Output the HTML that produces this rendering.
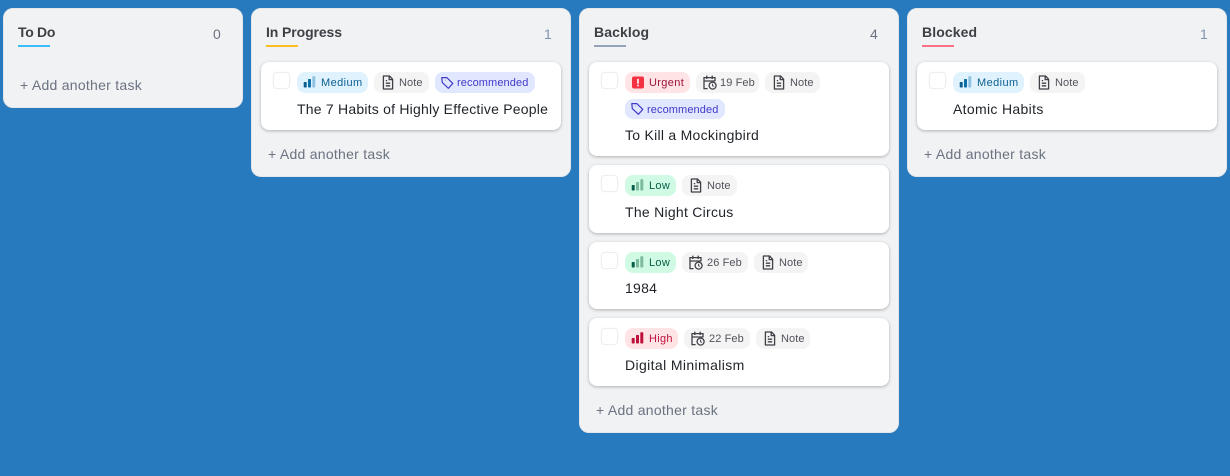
<!DOCTYPE html>
<html lang="en"><head><meta charset="utf-8"><title>Board</title>
<style>
*{box-sizing:border-box}
html,body{margin:0;padding:0;width:1230px;height:476px;overflow:hidden;background:#267abd;font-family:"Liberation Sans",sans-serif}
.col{position:absolute;top:8px;background:#f1f2f4;border-radius:10px;border:1px solid #e4e6ea}
.h{position:absolute;top:15px;left:14px;font-size:14px;line-height:17px;font-weight:700;color:#3f3f46;white-space:nowrap}
.u{position:absolute;top:36px;left:14px;width:32px;height:2px}
.n{position:absolute;top:17px;font-size:14px;line-height:16px;color:#6b7280}
.add{position:absolute;font-size:14px;line-height:18px;color:#6b7280;white-space:nowrap;letter-spacing:.27px}
.card{position:absolute;left:9px;width:300px;background:#fff;border-radius:8px;box-shadow:0 1px 3px rgba(0,0,0,.28)}
.cb{position:absolute;left:12px;top:10px;width:17px;height:17px;border:1px solid #eceef1;border-radius:4px;background:#fff;box-shadow:0 0 2px rgba(0,0,0,.04)}
.t{position:absolute;left:36px;font-size:14px;line-height:18px;color:#1f2328;white-space:nowrap;letter-spacing:.27px}
.c{position:absolute;height:21px;border-radius:8px;font-size:11px;line-height:21px;white-space:nowrap}
.c svg{position:absolute;top:3px;left:6px;width:14px;height:15px}
.c span{position:absolute;top:1px;letter-spacing:.1px}
.m{background:#e0f2fe;color:#0b5f8f}.g{background:#f4f4f5;color:#52525b}.r{background:#e0e7ff;color:#4338ca}
.ur{background:#ffe4e6;color:#9f1239}.lo{background:#d1fae5;color:#065f46}.hi{background:#ffe4e6;color:#be123c}
.m span{letter-spacing:.4px}.ur span{letter-spacing:.35px}.lo span,.hi span{letter-spacing:.3px}
.cal{left:7px!important}
</style></head><body>
<svg width="0" height="0" style="position:absolute">
<symbol id="note" viewBox="0 0 14 15"><path d="M2.6 1h5.9L11.6 4.2V14H2.4V1zM8.2 1.2v3.4h3.2M4.8 8.2h4.4M4.8 10.8h4.4M4.8 5.6h1.4" fill="none" stroke="#3f3f46" stroke-width="1.3" stroke-linejoin="round"/></symbol>
<symbol id="tag" viewBox="0 0 14 15"><path d="M.8 2.6h5l6 5.8-4.4 4.9L1.3 7.6zM4 5.2h.4" fill="none" stroke="#4338ca" stroke-width="1.2" stroke-linejoin="round"/></symbol>
<symbol id="cal" viewBox="0 0 14 15"><path d="M4.6 13.6H1V2.6h11v3.6M1 6h11M3.8 .6v3.4M9.2 .6v3.4" fill="none" stroke="#3f3f46" stroke-width="1.3"/><circle cx="9.6" cy="10.6" r="3.5" fill="#f4f4f5" stroke="#3f3f46" stroke-width="1.3"/><path d="M9.6 8.8v1.9l1.1.7" fill="none" stroke="#3f3f46" stroke-width="1"/></symbol>
<symbol id="bm" viewBox="0 0 14 15"><rect x=".7" y="7" width="3" height="5.5" rx=".7" fill="#0b5f8f"/><rect x="5" y="4" width="3" height="8.5" rx=".7" fill="#0b6fa8"/><rect x="9.3" y="1.3" width="3" height="11.2" rx=".7" fill="#8fc1e0"/></symbol>
<symbol id="bl" viewBox="0 0 14 15"><rect x=".7" y="7" width="3" height="5.5" rx=".7" fill="#065f46"/><rect x="5" y="4" width="3" height="8.5" rx=".7" fill="#7dbb9f"/><rect x="9.3" y="1.3" width="3" height="11.2" rx=".7" fill="#7dbb9f"/></symbol>
<symbol id="bh" viewBox="0 0 14 15"><rect x=".7" y="7" width="3" height="5.5" rx=".7" fill="#be123c"/><rect x="5" y="4" width="3" height="8.5" rx=".7" fill="#be123c"/><rect x="9.3" y="1.3" width="3" height="11.2" rx=".7" fill="#be123c"/></symbol>
<symbol id="ex" viewBox="0 0 14 15"><rect x="1" y="1.5" width="12" height="12" rx="2" fill="#f43241"/><rect x="6.2" y="3.9" width="1.6" height="4.8" fill="#fff"/><rect x="6.2" y="9.7" width="1.6" height="1.6" fill="#fff"/></symbol>
</svg>

<div class="col" style="left:3px;width:240px;height:100px">
<div class="h" style="letter-spacing:-.3px">To Do</div><div class="u" style="background:#38bdf8"></div><div class="n" style="left:209px">0</div>
<div class="add" style="left:16px;top:67px">+ Add another task</div>
</div>

<div class="col" style="left:251px;width:320px;height:169px">
<div class="h" style="letter-spacing:-.1px">In Progress</div><div class="u" style="background:#fbbf24"></div><div class="n" style="left:292px;color:#7e93ad">1</div>
<div class="card" style="top:53px;height:68px"><div class="cb"></div>
<div class="c m" style="left:36px;top:10px;width:71px"><svg><use href="#bm"/></svg><span style="left:24px">Medium</span></div>
<div class="c g" style="left:113px;top:10px;width:55px"><svg style="left:7px"><use href="#note"/></svg><span style="left:25px">Note</span></div>
<div class="c r" style="left:174px;top:10px;width:100px"><svg><use href="#tag"/></svg><span style="left:22px">recommended</span></div>
<div class="t" style="top:38px;letter-spacing:.22px">The 7 Habits of Highly Effective People</div>
</div>
<div class="add" style="left:16px;top:136px">+ Add another task</div>
</div>

<div class="col" style="left:579px;width:320px;height:425px">
<div class="h" style="letter-spacing:.1px">Backlog</div><div class="u" style="background:#94a3b8"></div><div class="n" style="left:290px">4</div>

<div class="card" style="top:53px;height:94px"><div class="cb"></div>
<div class="c ur" style="left:36px;top:10px;width:65px"><svg><use href="#ex"/></svg><span style="left:24px">Urgent</span></div>
<div class="c g" style="left:107px;top:10px;width:63px"><svg class="cal"><use href="#cal"/></svg><span style="left:24px">19 Feb</span></div>
<div class="c g" style="left:176px;top:10px;width:55px"><svg style="left:7px"><use href="#note"/></svg><span style="left:25px">Note</span></div>
<div class="c r" style="left:36px;top:37px;width:100px;height:20px;line-height:20px"><svg style="top:2px"><use href="#tag"/></svg><span style="left:22px">recommended</span></div>
<div class="t" style="top:64px">To Kill a Mockingbird</div>
</div>

<div class="card" style="top:156px;height:68px"><div class="cb"></div>
<div class="c lo" style="left:36px;top:10px;width:51px"><svg><use href="#bl"/></svg><span style="left:24px">Low</span></div>
<div class="c g" style="left:93px;top:10px;width:55px"><svg style="left:7px"><use href="#note"/></svg><span style="left:25px">Note</span></div>
<div class="t" style="top:38px">The Night Circus</div>
</div>

<div class="card" style="top:233px;height:67px"><div class="cb"></div>
<div class="c lo" style="left:36px;top:10px;width:51px"><svg><use href="#bl"/></svg><span style="left:24px">Low</span></div>
<div class="c g" style="left:93px;top:10px;width:66px"><svg class="cal"><use href="#cal"/></svg><span style="left:25px">26 Feb</span></div>
<div class="c g" style="left:165px;top:10px;width:54px"><svg style="left:7px"><use href="#note"/></svg><span style="left:25px">Note</span></div>
<div class="t" style="top:37px">1984</div>
</div>

<div class="card" style="top:309px;height:68px"><div class="cb"></div>
<div class="c hi" style="left:36px;top:10px;width:53px"><svg><use href="#bh"/></svg><span style="left:24px">High</span></div>
<div class="c g" style="left:95px;top:10px;width:66px"><svg class="cal"><use href="#cal"/></svg><span style="left:25px">22 Feb</span></div>
<div class="c g" style="left:167px;top:10px;width:54px"><svg style="left:7px"><use href="#note"/></svg><span style="left:25px">Note</span></div>
<div class="t" style="top:38px;letter-spacing:.38px">Digital Minimalism</div>
</div>
<div class="add" style="left:16px;top:392px">+ Add another task</div>
</div>

<div class="col" style="left:907px;width:320px;height:169px">
<div class="h" style="letter-spacing:.1px">Blocked</div><div class="u" style="background:#fb7185"></div><div class="n" style="left:292px;color:#7e93ad">1</div>
<div class="card" style="top:53px;height:68px"><div class="cb"></div>
<div class="c m" style="left:36px;top:10px;width:71px"><svg><use href="#bm"/></svg><span style="left:24px">Medium</span></div>
<div class="c g" style="left:113px;top:10px;width:55px"><svg style="left:7px"><use href="#note"/></svg><span style="left:25px">Note</span></div>
<div class="t" style="top:38px;letter-spacing:.33px">Atomic Habits</div>
</div>
<div class="add" style="left:16px;top:136px">+ Add another task</div>
</div>
</body></html>
